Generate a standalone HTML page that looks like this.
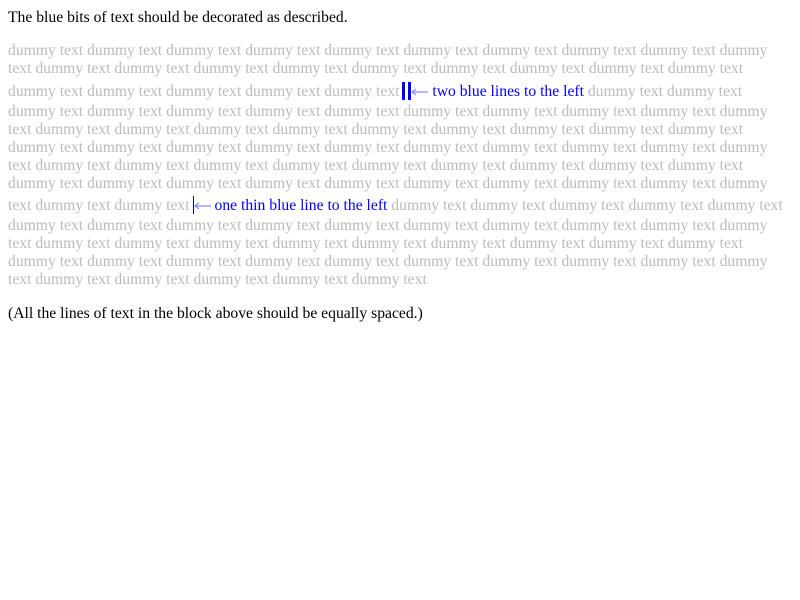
<!DOCTYPE html>
<html><head><style>
body{margin:0;background:#fff;font-family:"Liberation Serif",serif;font-size:15.65px;}
.l{position:absolute;left:8px;white-space:nowrap;line-height:18px;height:18px;}
.g{color:#bbb}
.b{color:#00f}
.dbl{display:inline-block;border-left:9px double #00f;height:18px;vertical-align:-4px;margin-left:3px;}
.thin{display:inline-block;border-left:1px solid #00f;height:18px;vertical-align:-4px;margin-left:3px;}
.ar{display:inline-block;vertical-align:0px;}
</style></head><body>
<div class="l" style="top:9px">The blue bits of text should be decorated as described.</div>
<div class="l g" style="top:42px">dummy text dummy text dummy text dummy text dummy text dummy text dummy text dummy text dummy text dummy</div>
<div class="l g" style="top:60px">text dummy text dummy text dummy text dummy text dummy text dummy text dummy text dummy text dummy text</div>
<div class="l g" style="top:82px">dummy text dummy text dummy text dummy text dummy text<span class="dbl"></span><svg class="ar" width="17" height="8" viewBox="0 0 17 8"><path d="M1 4H17M5 1L1 4L5 7" stroke="#88f" stroke-width="1.2" fill="none"/></svg> <span class="b">two blue lines to the left</span> dummy text dummy text</div>
<div class="l g" style="top:103px">dummy text dummy text dummy text dummy text dummy text dummy text dummy text dummy text dummy text dummy</div>
<div class="l g" style="top:121px">text dummy text dummy text dummy text dummy text dummy text dummy text dummy text dummy text dummy text</div>
<div class="l g" style="top:139px">dummy text dummy text dummy text dummy text dummy text dummy text dummy text dummy text dummy text dummy</div>
<div class="l g" style="top:157px">text dummy text dummy text dummy text dummy text dummy text dummy text dummy text dummy text dummy text</div>
<div class="l g" style="top:175px">dummy text dummy text dummy text dummy text dummy text dummy text dummy text dummy text dummy text dummy</div>
<div class="l g" style="top:196px">text dummy text dummy text<span class="thin"></span><svg class="ar" width="17" height="8" viewBox="0 0 17 8"><path d="M1 4H17M5 1L1 4L5 7" stroke="#88f" stroke-width="1.2" fill="none"/></svg> <span class="b">one thin blue line to the left</span> dummy text dummy text dummy text dummy text dummy text</div>
<div class="l g" style="top:217px">dummy text dummy text dummy text dummy text dummy text dummy text dummy text dummy text dummy text dummy</div>
<div class="l g" style="top:235px">text dummy text dummy text dummy text dummy text dummy text dummy text dummy text dummy text dummy text</div>
<div class="l g" style="top:253px">dummy text dummy text dummy text dummy text dummy text dummy text dummy text dummy text dummy text dummy</div>
<div class="l g" style="top:271px">text dummy text dummy text dummy text dummy text dummy text</div>
<div class="l" style="top:305px">(All the lines of text in the block above should be equally spaced.)</div>
</body></html>
